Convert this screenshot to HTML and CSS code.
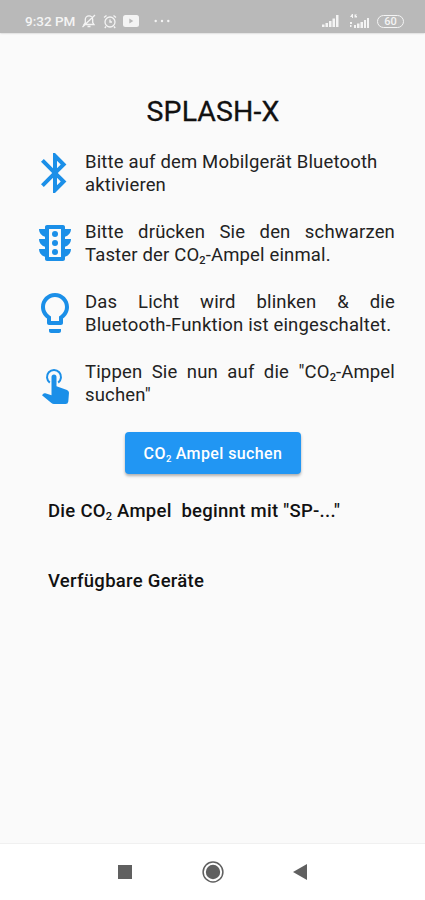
FILE: index.html
```
<!DOCTYPE html>
<html lang="de">
  <head>
    <meta charset="utf-8">
    <meta name="viewport" content="width=device-width, initial-scale=1">
    <title>SPLASH-X</title>
    <link rel="stylesheet" href="styles.css">
  </head>

  <body>
    <header class="statusbar">
      <span class="clock">9:32 PM</span>
      <svg class="mute" width="16" height="16" viewBox="0 0 16 16" fill="none" stroke="currentColor" stroke-width="1.3">
        <path d="M3 11.5h10l-1.3-2V6.500a3.700 3.700 0 0 0-7.400 0v3zM6.500 13.500h3M1.500 14L14 2"/>
      </svg>
      <svg class="alarm" width="14" height="15" viewBox="0 0 14 15" fill="none" stroke="currentColor" stroke-width="1.3">
        <circle cx="7" cy="8" r="5"/>
        <path d="M1 3.500L3.500 1.500M13 3.500L10.500 1.500M7 5.500V8h2M3 12.500l-1.200 1.500M11 12.500l1.200 1.500"/>
      </svg>
      <svg class="video" width="16" height="12" viewBox="0 0 16 12">
        <rect width="16" height="12" rx="2.500" fill="currentColor"/>
        <path d="M6.300 3.500v5l4-2.500z" fill="#b9b9b9"/>
      </svg>
      <svg class="more" width="16" height="4" viewBox="0 0 16 4" fill="currentColor">
        <circle cx="1.700" cy="2" r="1.200"/><circle cx="8" cy="2" r="1.200"/><circle cx="14.300" cy="2" r="1.200"/>
      </svg>
      <svg class="signal" width="17" height="12" viewBox="0 0 17 12" fill="currentColor">
        <path d="M0 9.500h2.500V12H0zM3.500 8H6v4H3.500zM7 6h2.500v6H7zM10.500 3.500H13V12h-2.500zM14 0h2.500v12H14z"/>
      </svg>
      <svg class="signal4g" width="21" height="14" viewBox="0 0 21 14" fill="currentColor">
        <path d="M3 0L1 3h2v1h1V0zM8 .5H5.500v3H8V2H6.800M1 8h2v2H1zM1 11h1.500v2H1zM5 11h2v3H5zM8 9.500h2.500V14H8zM11.500 8H14v6h-2.500zM15 6h2v8h-2zM18 4h2v10h-2z"/>
      </svg>
      <span class="battery">60</span>
    </header>

    <main class="content">
      <h1>SPLASH-X</h1>

      <div class="step">
        <svg class="icon" viewBox="0 0 24 24">
          <path d="M17.710 7.710L12 2h-1v7.590L6.410 5 5 6.410 10.590 12 5 17.590 6.410 19 11 14.410V22h1l5.710-5.710-4.300-4.290 4.300-4.290zM13 5.830l1.880 1.880L13 9.590V5.830zm1.880 10.460L13 18.170v-3.760l1.880 1.880z"/>
        </svg>
        <p>Bitte auf dem Mobilgerät Bluetooth aktivieren</p>
      </div>

      <div class="step">
        <svg class="icon" viewBox="0 0 24 24">
          <path d="M20 10h-3V8.860c1.720-.45 3-2 3-3.860h-3V4c0-.55-.45-1-1-1H8c-.55 0-1 .45-1 1v1H4c0 1.860 1.280 3.410 3 3.860V10H4c0 1.860 1.280 3.410 3 3.860V15H4c0 1.860 1.280 3.410 3 3.860V20c0 .55.45 1 1 1h8c.55 0 1-.45 1-1v-1.140c1.720-.45 3-2 3-3.860h-3v-1.140c1.720-.45 3-2 3-3.860zm-5 9H9V5h6v14z"/>
          <circle cx="12" cy="7.500" r="1.500"/>
          <circle cx="12" cy="12" r="1.500"/>
          <circle cx="12" cy="16.500" r="1.500"/>
        </svg>
        <p class="justify">Bitte drücken Sie den schwarzen Taster der CO<sub>2</sub>-Ampel einmal.</p>
      </div>

      <div class="step">
        <svg class="icon" viewBox="0 0 24 24">
          <path d="M9 21c0 .55.45 1 1 1h4c.55 0 1-.45 1-1v-1H9v1zm3-19C8.140 2 5 5.140 5 9c0 2.380 1.190 4.470 3 5.740V17c0 .55.45 1 1 1h6c.55 0 1-.45 1-1v-2.260c1.810-1.270 3-3.360 3-5.740 0-3.860-3.140-7-7-7zm2.850 11.100l-.85.6V16h-4v-2.300l-.85-.6C7.800 12.160 7 10.630 7 9c0-2.760 2.240-5 5-5s5 2.240 5 5c0 1.630-.8 3.160-2.150 4.100z"/>
        </svg>
        <p class="justify">Das Licht wird blinken &amp; die Bluetooth-Funktion ist eingeschaltet.</p>
      </div>

      <div class="step">
        <svg class="icon touch" viewBox="0 0 27 36">
          <path d="M7.800 14.600a7 7 0 1 1 8.400 0" fill="none" stroke="#1b8fe8" stroke-width="2"/>
          <path d="M9.500 9a2.500 2.500 0 0 1 5 0v9.300l10.500 3.600q2 .8 2 2.900l-.7 8.700q-.3 2.500-2.800 2.500H12q-1.500 0-2.600-1L0 27.200l1.300-1.500q.8-.8 2-.4l6.200 2z"/>
        </svg>
        <p class="justify">Tippen Sie nun auf die "CO<sub>2</sub>-Ampel suchen"</p>
      </div>

      <button class="search" type="button">CO<sub>2</sub> Ampel suchen</button>

      <h2>Die CO<sub>2</sub> Ampel&nbsp; beginnt mit "SP-..."</h2>
      <h2 class="devices">Verfügbare Geräte</h2>
    </main>

    <nav class="navbar">
      <svg width="14" height="14" viewBox="0 0 14 14"><rect width="14" height="14" fill="#606060"/></svg>
      <svg width="22" height="22" viewBox="0 0 22 22">
        <circle cx="11" cy="11" r="9.900" fill="none" stroke="#606060" stroke-width="1.500"/>
        <circle cx="11" cy="11" r="7.200" fill="#606060"/>
      </svg>
      <svg width="14" height="16" viewBox="0 0 14 16"><path d="M14 0v16L0 8z" fill="#606060"/></svg>
    </nav>
  </body>
</html>
```
FILE: styles.css
```
* {box-sizing:border-box;}
body {margin:0; height:900px; display:flex; flex-direction:column; background:#fafafa; color:#111; font-family:"Roboto", sans-serif; overflow:hidden;}
h1,h2,p {margin:0;}
sub {font-size:60%; font-weight:500; line-height:0; letter-spacing:0; vertical-align:-3px;}

.statusbar {height:33px; flex:none; display:flex; align-items:center; padding:9px 21px 0 25px; background:#b9b9b9; color:#f4f4f4; box-shadow:0 0 2px #bbb;}
.clock {font-size:13.500px; font-weight:500; width:51px; white-space:nowrap;}
.mute {margin-left:5px;}
.alarm {margin-left:6px;}
.video {margin-left:6px;}
.more {margin-left:15px;}
.signal {margin-left:auto;}
.signal4g {margin-left:10px;}
.battery {margin-left:7px; width:27px; height:13px; border:1.500px solid #f4f4f4; border-radius:7px; font-size:11px; font-weight:500; line-height:11px; text-align:center;}

.content {flex:1; padding:63px 30px 0 31px;}
h1 {font-size:28.500px; font-weight:400; line-height:32px; text-align:center; letter-spacing:0.1px; -webkit-text-stroke:0.3px #111;}
h1 + .step {margin-top:21px;}
.step {display:flex; align-items:center; height:48px; margin-bottom:22px;}
.icon {width:48px; height:48px; flex:none; fill:#1b8fe8;}
.touch {width:27px; height:36px; margin:6px 10px 0 11px;}
.step p {width:310px; margin:1px 0 0 6px; color:#222; font-size:18.500px; line-height:22.500px; letter-spacing:0.16px; font-weight:400;}
.step .justify {text-align:justify;}

.search {display:block; width:176px; height:42px; margin:25px auto 0 94px; padding:0; border:0; border-radius:4px; background:#2196f3; color:#fff; font-family:inherit; font-size:16px; font-weight:500; letter-spacing:0.4px; box-shadow:0 2px 3px rgba(0,0,0,0.3);}
h2 {margin:26px 0 0 17px; font-size:18.500px; font-weight:500; line-height:22px; letter-spacing:0.28px; white-space:nowrap;}
.devices {margin-top:48px;}

.navbar {height:57px; flex:none; display:flex; align-items:center; justify-content:space-between; padding:0 118px 0 118px; background:#fff; border-top:1px solid #f0f0f0;}
```
